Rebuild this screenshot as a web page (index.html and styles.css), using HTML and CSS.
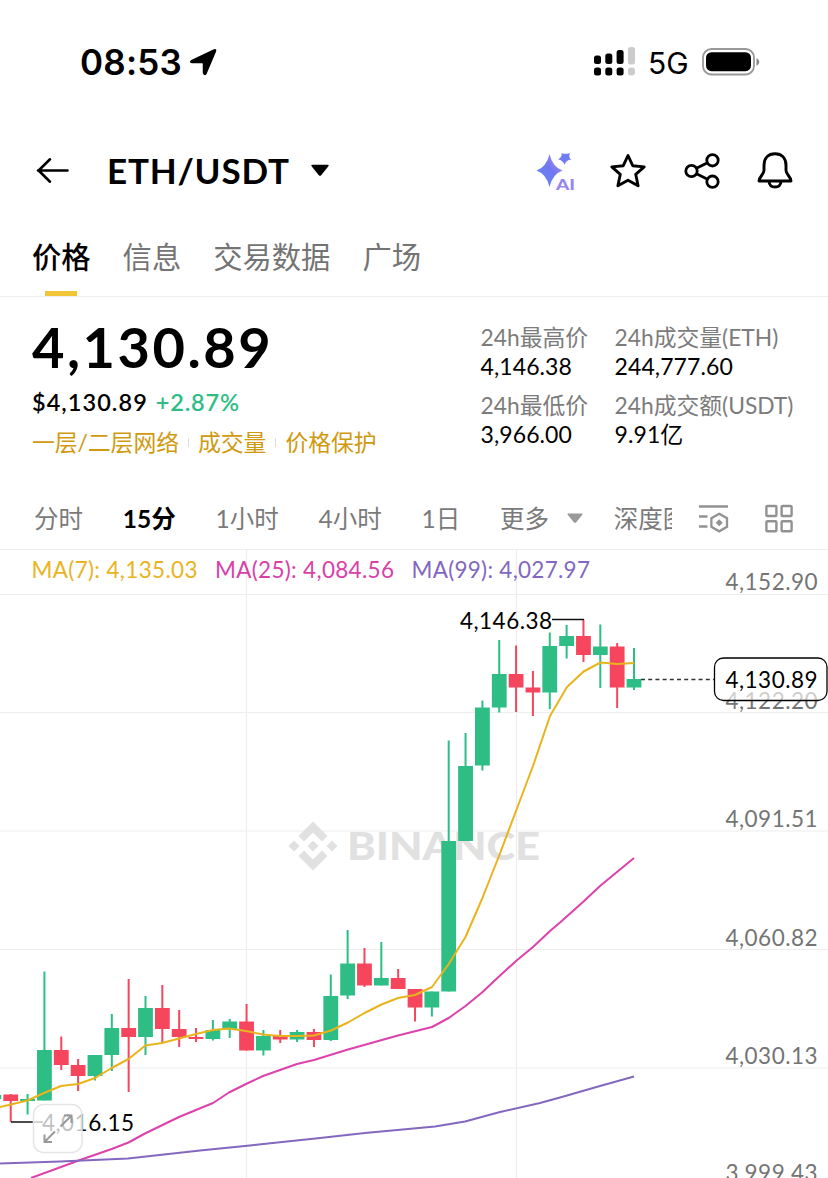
FILE: index.html
```html
<!DOCTYPE html>
<html lang="zh-CN">
<head>
<meta charset="utf-8">
<title>ETH/USDT</title>
<link rel="stylesheet" href="styles.css">
</head>
<body>
<div class="screen">
  <div class="status">
    <span class="clock">08:53</span>
    <svg class="loc" width="30" height="30" viewBox="0 0 30 30"><path d="M3.500 13.800 26.200 3Q28.200 2 27.300 4.400L18 26.500Q16.500 28.500 15.500 26V16.800Q15.500 15.500 14.200 15.500H4.200Q1.600 15.100 3.500 13.800Z" stroke="#000" stroke-width="1.500" stroke-linejoin="round"/></svg>
    <svg class="signal" width="42" height="30" viewBox="0 0 42 30">
      <g><rect x="0" y="8.500" width="7" height="8.500" rx="2.500"/><rect x="11.300" y="6.500" width="7" height="10.500" rx="2.500"/><rect x="22.600" y="3" width="7" height="14" rx="2.500"/>
      <rect x="0" y="20.500" width="7" height="8" rx="2.500"/><rect x="11.300" y="20.500" width="7" height="8" rx="2.500"/><rect x="22.600" y="20.500" width="7" height="8" rx="2.500"/></g>
      <g fill="#ccc"><rect x="34" y="0" width="7" height="17.500" rx="2.500"/><rect x="34" y="20.500" width="7" height="8" rx="3"/></g>
    </svg>
    <span class="net">5G</span>
    <svg class="battery" width="58" height="28" viewBox="0 0 58 28"><rect x="1" y="1" width="51" height="25.500" rx="8.500" fill="none" stroke="#999" stroke-width="1.800"/><rect x="4" y="4.200" width="45" height="19" rx="5.500"/><path d="M54.500 10v8q2.800-1.500 2.800-4t-2.800-4Z" fill="#888"/></svg>
  </div>

  <header class="nav">
    <svg class="back" width="34" height="28" viewBox="0 0 34 28"><path d="M31.500 13.500H2M14 2.300 2.600 13.500 14 24.700" fill="none" stroke="#000" stroke-width="2.600" stroke-linecap="round"/></svg>
    <h1 class="pair">ETH/USDT</h1>
    <svg class="caret" width="20" height="14" viewBox="0 0 20 14"><path d="M2 .8h16q1.200.4.400 1.400L11.200 11.200q-1.200 1-2.400 0L1.600 2.200Q.8 1.200 2 .8Z"/></svg>
    <div class="actions">
      <svg class="assistant" width="46" height="42" viewBox="-3 0 46 42">
        <defs><linearGradient id="ai" x1="0" y1="1" x2="1" y2="0"><stop offset="0" stop-color="#5b8af5"/><stop offset=".55" stop-color="#7277f0"/><stop offset="1" stop-color="#bb96f0"/></linearGradient></defs>
        <path d="M14.500 4Q17.500 17 27.500 20.500 17.500 24 14.500 37 11.500 24 1.500 20.500 11.500 17 14.500 4Z" fill="url(#ai)"/><path d="M26.500 3q3.200 1.700 8.500 0-2 4 1.200 6.500-5 .3-6.600 5.200-1.700-4.500-6.500-5.500 4.500-2.200 3.400-6.200Z" fill="#717cf2"/>
        <text class="ai" x="21" y="40" textLength="19" lengthAdjust="spacingAndGlyphs">AI</text>
      </svg>
      <svg width="38" height="38" viewBox="0 0 38 38"><path d="m19 3.500 4.700 10.200 11.500 1.200-8.500 7.400 2.400 11.500L19 28.300 8.900 33.800l2.400-11.500-8.500-7.400 11.500-1.200Z" fill="none" stroke="#000" stroke-width="2.900" stroke-linejoin="round"/></svg>
      <svg width="38" height="38" viewBox="0 0 38 38"><g fill="none" stroke="#000" stroke-width="2.800"><circle cx="8.500" cy="19" r="5.700"/><circle cx="29.500" cy="8.300" r="5.700"/><circle cx="29.500" cy="29.700" r="5.700"/><path d="m13.500 16.300 11-5.500M13.500 21.700l11 5.500"/></g></svg>
      <svg width="38" height="40" viewBox="0 0 38 40"><g fill="none" stroke="#000" stroke-width="2.900" stroke-linejoin="round"><path d="M8 14.500C8 7 12.500 2.800 19 2.800S30 7 30 14.500v4.700c0 4.800 5 6.300 5 10.800H3c0-4.500 5-6 5-10.800Z"/><path d="M13 30.500c.3 3.500 2.500 5.500 6 5.500s5.700-2 6-5.500"/></g></svg>
    </div>
  </header>

  <nav class="tabs"><span class="tab active">价格</span><span class="tab">信息</span><span class="tab">交易数据</span><span class="tab">广场</span></nav>

  <section class="summary">
    <div class="quote">
      <div class="price">4,130.89</div>
      <div class="fiat"><span class="usd">$4,130.89</span><span class="change">+2.87%</span></div>
      <div class="tags"><span>一层/二层网络</span><i></i><span>成交量</span><i></i><span>价格保护</span></div>
    </div>
    <dl class="stats">
      <div><dt>24h最高价</dt><dd>4,146.38</dd></div>
      <div><dt>24h成交量(ETH)</dt><dd>244,777.60</dd></div>
      <div><dt>24h最低价</dt><dd>3,966.00</dd></div>
      <div><dt>24h成交额(USDT)</dt><dd>9.91亿</dd></div>
    </dl>
  </section>

  <div class="intervals">
    <div class="scroll"><span>分时</span><span class="on">15分</span><span>1小时</span><span>4小时</span><span>1日</span><span class="more">更多<svg width="16" height="11" viewBox="0 0 16 11"><path d="M1 .5h14q1 .3.300 1.200L9 9.600q-1 .9-2 0L.7 1.700Q0 .8 1 .5Z" fill="#999"/></svg></span><span>深度图</span></div>
    <svg class="tool" width="32" height="30" viewBox="0 0 32 30"><g fill="none" stroke="#929292" stroke-width="2.300"><path d="M1 2.500h29M1 12.500h8.500M1 22.500h8.500"/><path d="m21.200 9.800 7.800 4.400v8.600l-7.800 4.500-7.800-4.500v-8.600Z"/></g><path d="m21.200 15.200 3.500 3.500-3.500 3.500-3.500-3.500Z" fill="#929292"/></svg>
    <svg class="tool grid" width="30" height="30" viewBox="0 0 30 30"><g fill="none" stroke="#929292" stroke-width="2.400"><rect x="2.400" y="2" width="10" height="10" rx="1"/><rect x="17.600" y="2" width="10" height="10" rx="1"/><rect x="2.400" y="17.200" width="10" height="10" rx="1"/><rect x="17.600" y="17.200" width="10" height="10" rx="1"/></g></svg>
  </div>

  <svg class="chart" id="chart" width="828" height="629" viewBox="0 549 828 629">
    <path class="gridline" d="M0 549.500H828M0 594.500H828M0 712.500H828M0 831H828M0 949.500H828M0 1068H828M246.500 550V1178M516.500 550V1178"/>
    <g class="mark">
      <path d="m313 821.500 14.500 14.500-5.500 5.500-9-9-9 9-5.500-5.500ZM313 870.500l14.500-14.500-5.500-5.500-9 9-9-9-5.500 5.500ZM313 840.500l5.500 5.500-5.500 5.500-5.500-5.500ZM294 840.500l5.500 5.500-5.500 5.500-5.500-5.500ZM332 840.500l5.500 5.500-5.500 5.500-5.500-5.500Z"/>
      <text x="347" y="859.500" textLength="193" lengthAdjust="spacingAndGlyphs">BINANCE</text>
    </g>
    <g class="legend">
      <text x="31.500" y="577.500" textLength="166" fill="#e9b422">MA(7): 4,135.03</text>
      <text x="215" y="577.500" textLength="179" fill="#d940a8">MA(25): 4,084.56</text>
      <text x="411.500" y="577.500" textLength="178.500" fill="#8267c0">MA(99): 4,027.97</text>
    </g>
    <g class="axis">
      <text x="725.500" y="590" textLength="92">4,152.90</text><text x="725.500" y="709" textLength="92">4,122.20</text>
      <text x="725.500" y="827" textLength="92">4,091.51</text><text x="725.500" y="946" textLength="92">4,060.82</text>
      <text x="725.500" y="1064" textLength="92">4,030.13</text><text x="725.500" y="1180.500" textLength="92">3,999.43</text>
    </g>
    <g id="candles"></g>
    <polyline class="ma" stroke="#e8b41e" points="0,1107 10.7,1104.5 27.5,1100.500 44,1093 61,1086 78,1084 95,1078 111.700,1068 128.500,1059 145.400,1045.500 162,1043 179,1038.500 196,1034 213,1030 229,1028.500 246,1031 263,1034.500 280,1036 297,1036 314,1035.500 331,1030.500 348,1022.500 364.500,1013 381.500,1004.500 398,998 415,995 432,987 448.700,964 465.500,937 482,899 499,856 516,811 533,766 550,716 567,687 583.600,671.500 600.500,662.500 617,664 634,663"/>
    <polyline class="ma" stroke="#dc42ab" points="31,1178 61,1167 80,1160 111.700,1149 128.500,1142.500 145,1133.500 179,1117 213,1103 229,1092.500 246,1084 263,1076 280,1070 297,1064 314,1060 348,1049.500 398,1035.500 432,1027 448.700,1018 465.500,1006 482,992.500 499,976.500 516,961 533,947 550,931 560,922.500 583,902 600,886 634,858"/>
    <polyline class="ma" stroke="#8467bf" points="0,1163.500 60,1161.500 128,1158.500 200,1150.500 250,1145.500 320,1138 365,1133 435,1126.500 465,1121.500 500,1112 540,1103 560,1097.500 600,1086 634,1076.500"/>
    <g class="extreme"><path d="M552 619.500H584M11 1122H43"/><text x="460" y="628.500" textLength="92">4,146.38</text><text x="42" y="1130.500" textLength="92">4,016.15</text></g>
    <path d="M641 679.500H714" stroke="#333" stroke-width="1.500" stroke-dasharray="4 3.200"/>
    <rect x="714.500" y="658" width="112.500" height="42.500" rx="9" fill="#fff" fill-opacity=".65" stroke="#000" stroke-width="1.300"/>
    <text class="last" x="725.500" y="688" textLength="92">4,130.89</text>
    <g class="expand"><rect x="33.500" y="1104.500" width="48.500" height="48" rx="10" fill="#fff" fill-opacity=".75" stroke="#e5e5e5" stroke-width="1.500"/><path d="M60.500 1126.500 71 1116M64 1115.500h7.500v7.500M55 1131.500 45 1141.500M44.500 1134.500v7.500h7.500" fill="none" stroke="#999" stroke-width="2"/></g>
  </svg>
</div>
<script src="chart.js"></script>
</body>
</html>
```
FILE: styles.css
```css
* { box-sizing: border-box; }
body { margin: 0; background: #fff; color: #000; font-family: Lato, "Noto Sans CJK SC", sans-serif; }
svg { display: block; flex: none; }
.screen { width: 828px; height: 1178px; overflow: hidden; display: flex; flex-direction: column; }

.status { height: 124px; flex: none; display: flex; align-items: center; padding: 0 68px 0 80px; font-family: Inter, sans-serif; }
.clock { font-size: 35px; font-weight: 600; line-height: 40px; letter-spacing: .2px; width: 108px; }
.signal { margin-left: auto; }
.net { font-size: 30px; line-height: 40px; margin: 2px 14px 0 12px; width: 40px; }

.nav { height: 94px; flex: none; display: flex; align-items: center; padding: 0 34px 0 36px; }
.pair { margin: -3px 21px 0 37px; font-size: 35px; line-height: 44px; font-weight: 700; width: 182px; letter-spacing: .8px; white-space: nowrap; }
.actions { margin-left: auto; display: flex; align-items: center; gap: 35.500px; }
.assistant { margin-right: -4px; }
.ai { font: 900 15px Lato, sans-serif; fill: #9587ee; }

.tabs { height: 79px; flex: none; display: flex; gap: 32px; padding: 18px 32px 0; border-bottom: 1px solid #eee; }
.tab { font-size: 29.300px; line-height: 41px; color: #747474; height: 60px; }
.tab.active { color: #000; font-weight: 500; background: linear-gradient(#f0c536, #f0c536) center bottom / 32px 5px no-repeat; }

.summary { height: 191px; flex: none; display: flex; padding: 19px 0 0 32px; }
.quote { width: 448.500px; }
.price { font-size: 56px; line-height: 62px; font-weight: 700; letter-spacing: 2.500px; }
.fiat { display: flex; gap: 8px; margin-top: 8px; font-size: 23.500px; line-height: 32px; font-weight: 600; }
.usd { letter-spacing: 1.050px; }
.change { color: #2ebd85; letter-spacing: .8px; }
.tags { display: flex; align-items: center; gap: 9px; margin-top: 7px; color: #d09a10; font-size: 22.900px; line-height: 34px; letter-spacing: -.1px; white-space: nowrap; }
.tags i { width: 1px; height: 9px; background: #ddd; }
.stats { margin: 4px 0 0; display: grid; grid-template-columns: 134px 200px; grid-auto-rows: 67.500px; align-content: start; font-size: 23px; white-space: nowrap; }
.stats dt { color: #7c7c7c; line-height: 34px; font-size: 22.800px; height: 33px; }
.stats dd { margin: 0; line-height: 26px; letter-spacing: .1px; }

.intervals { height: 61px; flex: none; display: flex; align-items: center; padding-left: 34px; color: #7a7a7a; font-size: 24.500px; }
.scroll { width: 638px; overflow: hidden; display: flex; gap: 39.800px; white-space: nowrap; line-height: 36px; }
.scroll .on { color: #000; font-weight: 700; }
.more { display: flex; align-items: center; gap: 18px; margin-right: -9px; }
.tool { margin-left: 26px; }
.tool.grid { margin-left: 34px; }

.gridline { stroke: #ededed; stroke-width: 1.200; fill: none; }
.mark { fill: #e1e1e1; }
.mark text { font: 900 37px Lato, sans-serif; }
.legend, .axis, .extreme, .last { font-size: 22.500px; }
.axis { fill: #747474; }
.extreme path { stroke: #111; stroke-width: 1.300; }
.ma { fill: none; stroke-width: 2; stroke-linejoin: round; }
.up { fill: #2ebd85; }
.down { fill: #f6465d; }
```
FILE: chart.js
```js
// Each row: direction (1 up, 0 down), wick top, body top, body bottom, wick bottom.
const rows = [
  [1,1095,1095,1099,1099],[0,1094,1094.5,1101,1122],[1,1094,1099,1101,1114.5],[1,971.5,1050,1100.5,1100.5],
  [0,1036.5,1050,1065,1070],[0,1059,1065,1076,1091],[1,1055,1055,1076,1080.5],[1,1014,1028,1055,1071],
  [0,979,1028,1037,1092],[1,996,1008,1037,1055],[0,985,1008,1029,1043],[0,1010,1029,1037,1047],
  [0,1028,1037,1039,1042],[1,1020,1030,1039,1040.5],[1,1019,1021.5,1029.5,1038],[0,1004,1021.5,1050.5,1050.5],
  [1,1030,1036,1050.5,1055.5],[0,1030,1036,1039.5,1043],[1,1030,1032,1039.5,1042],[0,1029,1032,1040,1047],
  [1,974.5,996,1040,1041],[1,930,963.5,995.5,999],[0,948,963.5,985.5,987],[1,942,978,985.5,985.5],
  [0,969,978,989,989],[0,989,989,1007.5,1021.5],[1,991.5,991.5,1007.5,1016.5],[1,740.5,841,991.5,991.5],
  [1,733,766,841,841],[1,700.5,707.5,765.5,770.5],[1,640,674,707.5,712.5],[0,645.5,674,687.5,712],
  [0,671,687.5,692.5,716],[1,632.5,646,692.5,709],[1,625,636,646,658.5],[0,619.5,636,655,662],
  [1,624.5,646.5,655,688],[0,643,646.5,687.5,708],[1,648,679,687.5,690]
];
const NS = "http://www.w3.org/2000/svg";
const layer = document.getElementById("candles");
const bar = (x, y, w, h, cls) => {
  const r = document.createElementNS(NS, "rect");
  Object.entries({ x, y, width: w, height: h, class: cls }).forEach(([k, v]) => r.setAttribute(k, v));
  layer.appendChild(r);
};
rows.forEach(([up, high, top, bottom, low], i) => {
  const x = 634 - (rows.length - 1 - i) * 16.845;
  const cls = up ? "up" : "down";
  bar(x - 1, high, 2, low - high, cls);
  bar(x - 7.4, top, 14.8, bottom - top, cls);
});
```
